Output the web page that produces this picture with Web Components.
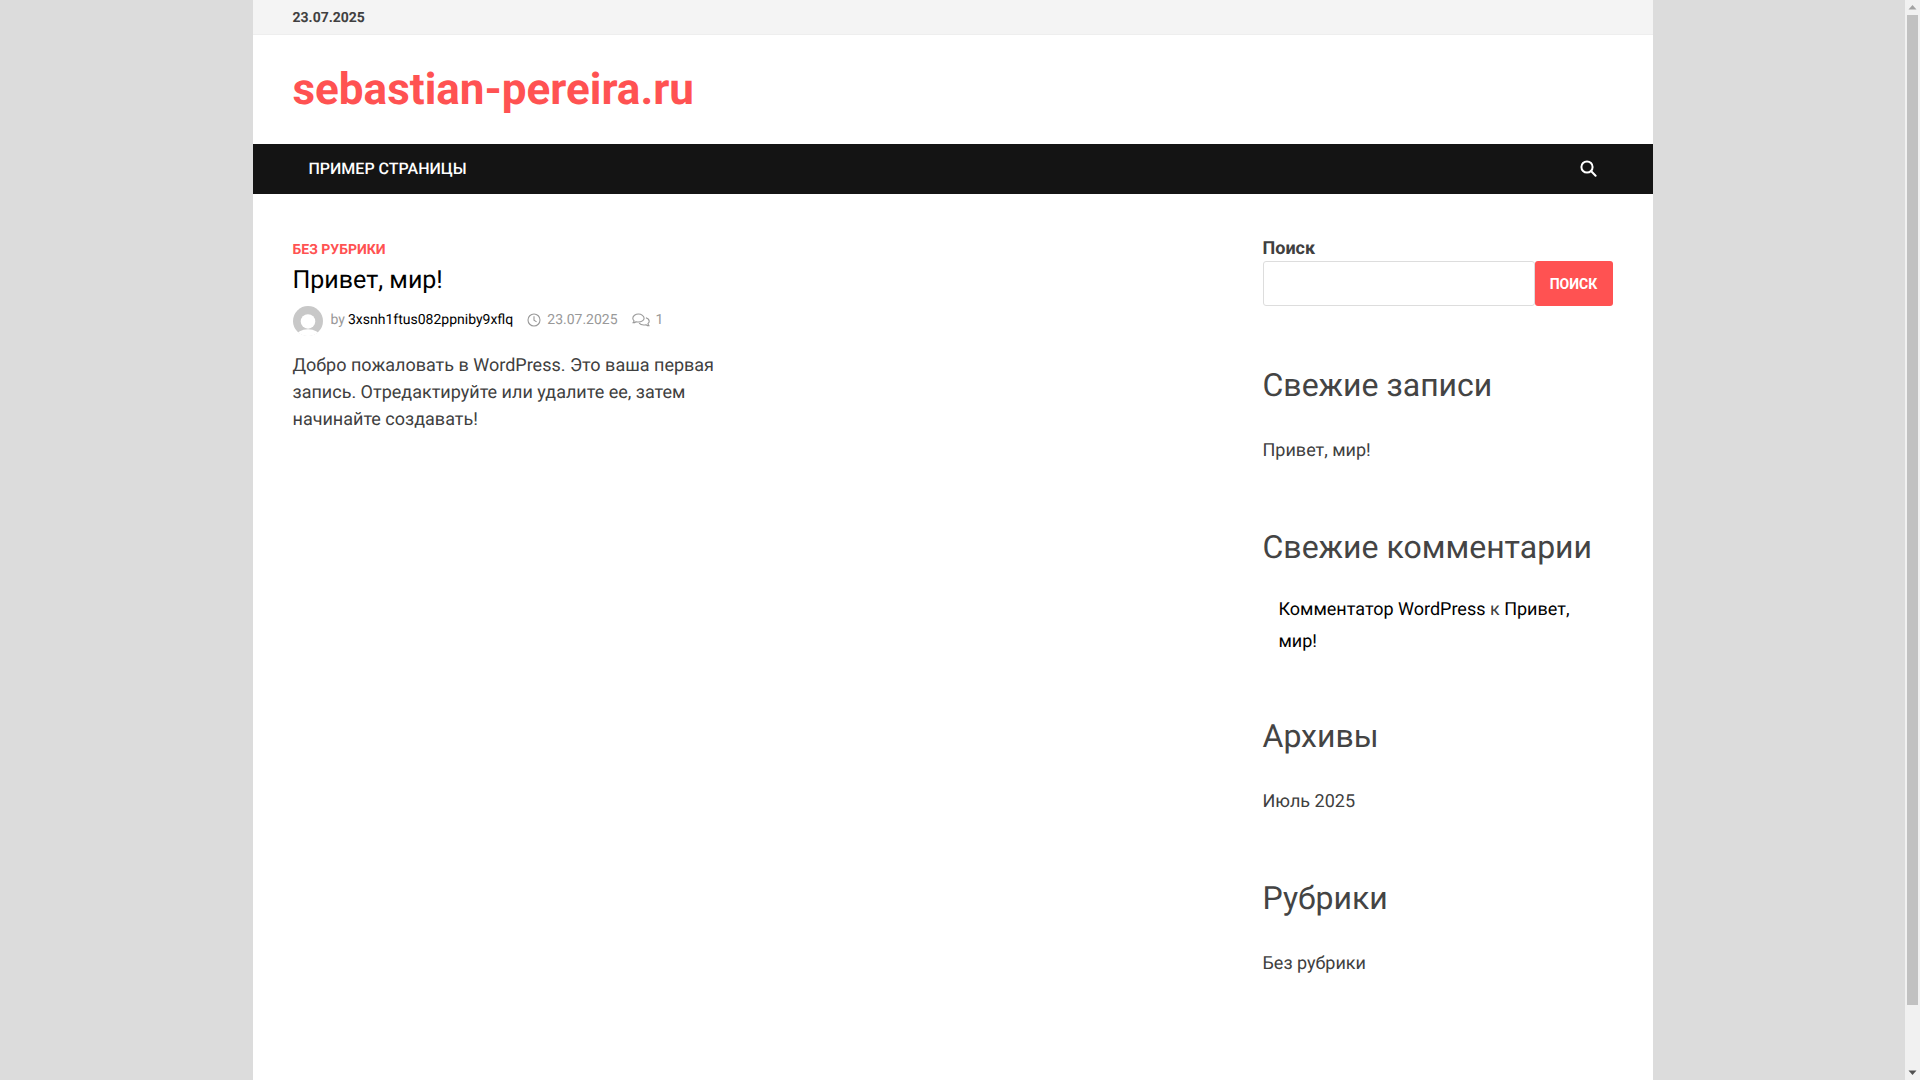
<!DOCTYPE html>
<html lang="ru">
<head>
<meta charset="utf-8">
<title>sebastian-pereira.ru</title>
<style>
	html, body { margin: 0; height: 100%; overflow: hidden; }
	body { display: flex; background: #dcdcdc; font-family: Roboto, "Liberation Sans", sans-serif; color: #404040; text-rendering: geometricPrecision; }
</style>
</head>
<body>
<site-page>
	<top-bar>23.07.2025</top-bar>
	<site-brand>sebastian-pereira.ru</site-brand>
	<main-nav>Пример страницы</main-nav>
	<site-content>
		<post-entry category="Без рубрики" heading="Привет, мир!" author="3xsnh1ftus082ppniby9xflq" date="23.07.2025" comments="1">
			Добро пожаловать в WordPress. Это ваша первая запись. Отредактируйте или удалите ее, затем начинайте создавать!
		</post-entry>
		<side-bar>
			<search-widget></search-widget>
			<side-widget heading="Свежие записи"><span>Привет, мир!</span></side-widget>
			<side-widget heading="Свежие комментарии" list><b>Комментатор WordPress</b> к <b>Привет,</b> <b>мир!</b></side-widget>
			<side-widget heading="Архивы"><span>Июль 2025</span></side-widget>
			<side-widget heading="Рубрики"><span>Без рубрики</span></side-widget>
		</side-bar>
	</site-content>
</site-page>
<fake-scrollbar></fake-scrollbar>

<script>
'use strict';

function define (name, css, html) {
	window.customElements.define(name, class extends HTMLElement {
		constructor () {
			super();
			let shadowRoot = this.attachShadow({mode: 'open'});
			let attrs = name => this.getAttribute(name) || '';
			shadowRoot.innerHTML = `<style>${css}</style>${typeof html === 'function' ? html(attrs) : html}`;
		}
	});
}

define('site-page', `
	:host {
		display: flex;
		flex-direction: column;
		width: 1400px;
		height: 1080px;
		margin-left: 252.5px;
		background: #fff;
		flex: none;
	}
`, '<slot></slot>');

define('top-bar', `
	:host {
		display: flex;
		align-items: center;
		height: 35px;
		box-sizing: border-box;
		padding: 1px 40px 0;
		background: #f4f4f4;
		border-bottom: 1px solid #eee;
		font-size: 14px;
		font-weight: 700;
		color: #404040;
	}
`, '<slot></slot>');

define('site-brand', `
	:host {
		display: flex;
		align-items: center;
		height: 109px;
		box-sizing: border-box;
		padding: 0 40px 2px;
		font-size: 44px;
		font-weight: 700;
		color: #ff5252;
	}
`, '<slot></slot>');

define('main-nav', `
	:host {
		display: flex;
		align-items: center;
		justify-content: space-between;
		height: 50px;
		padding: 0 56px;
		background: #141414;
		color: #fff;
		font-size: 16px;
		font-weight: 500;
		text-transform: uppercase;
		box-sizing: border-box;
	}
	span { margin-top: -2px; }
	svg { display: block; margin-top: -3px; }
`, `<span><slot></slot></span>
	<svg width="18" height="18" viewBox="0 0 18 18" fill="none" stroke="#fff" stroke-width="2">
		<circle cx="8" cy="8" r="5.6"/>
		<path d="M12 12l4.600 4.800" stroke-linecap="round"/>
	</svg>`);

define('site-content', `
	:host {
		display: flex;
		justify-content: space-between;
		align-items: flex-start;
		padding: 45px 40px 0;
	}
`, '<slot></slot>');

define('post-entry', `
	:host {
		display: block;
		width: 450px;
	}
	.cat {
		font-size: 14px;
		font-weight: 700;
		line-height: 22px;
		color: #ff5252;
		text-transform: uppercase;
	}
	h2 {
		margin: 2px 0 0;
		font-size: 25px;
		font-weight: 400;
		line-height: 36px;
		color: #000;
	}
	.meta {
		display: flex;
		align-items: center;
		margin-top: 4px;
		height: 34px;
		font-size: 14px;
		color: #999;
	}
	.meta svg { display: block; flex: none; }
	.avatar { margin: 2px 8px 0 0; }
	.by { margin-right: 3px; }
	.author { color: #000; margin-right: 14px; }
	.date { margin: 0 14px 0 6px; }
	.num { margin-left: 6px; }
	.text {
		margin-top: 15px;
		font-size: 18px;
		line-height: 27px;
		color: #404040;
	}
`, attr => `
	<div class="cat">${attr('category')}</div>
	<h2>${attr('heading')}</h2>
	<div class="meta">
		<svg class="avatar" width="30" height="30" viewBox="0 0 31 31">
			<defs><clipPath id="round"><circle cx="15.5" cy="15.5" r="15.5"/></clipPath></defs>
			<g clip-path="url(#round)">
				<rect width="31" height="31" fill="#c8c8c8"/>
				<circle cx="15.5" cy="16" r="7.5" fill="#fff"/>
				<ellipse cx="15.5" cy="31" rx="12" ry="7" fill="#fff"/>
				<rect y="27" width="31" height="4" fill="#fff"/>
			</g>
		</svg>
		<span class="by">by</span>
		<span class="author">${attr('author')}</span>
		<svg width="14" height="14" viewBox="0 0 14 14" fill="none" stroke="#999" stroke-width="1.1">
			<circle cx="7" cy="7" r="6"/>
			<path d="M7 3.200V7.300l2.600 1.600"/>
		</svg>
		<span class="date">${attr('date')}</span>
		<svg width="18" height="15" viewBox="0 0 18 15" fill="none" stroke="#999" stroke-width="1.1" stroke-linejoin="round">
			<path d="M6.500 1C3.500 1 .8 2.800.8 5.200c0 1 .5 1.900 1.300 2.600-.2.800-.7 1.500-1.200 2 1.200 0 2.400-.5 3.200-1.100.7.200 1.500.3 2.400.3 3 0 5.600-1.800 5.600-3.800S9.500 1 6.500 1z"/>
			<path d="M13.900 4.700c1.900.6 3.300 1.900 3.300 3.500 0 1-.5 1.800-1.300 2.500.2.800.6 1.500 1.200 2.100-1.200 0-2.300-.5-3.100-1.100-.7.200-1.500.3-2.300.3-1.900 0-3.600-.7-4.600-1.800"/>
		</svg>
		<span class="num">${attr('comments')}</span>
	</div>
	<div class="text"><slot></slot></div>
`);

define('side-bar', `
	:host {
		display: flex;
		flex-direction: column;
		width: 350px;
		margin-top: -4px;
	}
`, '<slot></slot>');

define('search-widget', `
	:host { display: block; margin-bottom: 56px; }
	label {
		display: block;
		font-size: 18px;
		font-weight: 700;
		line-height: 27px;
		color: #404040;
	}
	.row { display: flex; margin-top: -1px; }
	input {
		flex: 1;
		min-width: 0;
		height: 45px;
		box-sizing: border-box;
		border: 1px solid #ddd;
		border-radius: 3px;
		background: #fff;
		padding: 0 12px;
	}
	button {
		width: 78px;
		height: 45px;
		border: 0;
		border-radius: 3px;
		background: #ff5252;
		color: #fff;
		font: 700 14px Roboto, "Liberation Sans", sans-serif;
		text-transform: uppercase;
		padding: 0;
	}
`, `<label for="q">Поиск</label>
	<div class="row"><input id="q" type="text"><button type="button">Поиск</button></div>`);

define('side-widget', `
	:host { display: block; margin-bottom: 60px; }
	h2 {
		margin: 0;
		font-size: 32px;
		font-weight: 400;
		line-height: 46px;
		color: #444;
	}
	.body {
		margin-top: 29px;
		font-size: 18px;
		line-height: 27px;
		color: #404040;
	}
	:host([list]) .body {
		margin-top: 24px;
		padding: 0 30px 0 16px;
		line-height: 32px;
		color: #404040;
	}
	:host([list]) { margin-bottom: 55px; }
	::slotted(b) { font-weight: 400; color: #000; }
`, attr => `<h2>${attr('heading')}</h2><div class="body"><slot></slot></div>`);

define('fake-scrollbar', `
	:host {
		display: flex;
		flex-direction: column;
		align-items: center;
		justify-content: space-between;
		position: fixed;
		top: 0;
		right: 0;
		bottom: 0;
		width: 15px;
		box-sizing: border-box;
		background: #f1f1f1;
	}
	.thumb {
		position: absolute;
		top: 15px;
		left: 2px;
		right: 2px;
		height: 990px;
		background: #c1c1c1;
	}
	svg { display: block; }
`, `<svg width="15" height="15" viewBox="0 0 15 15"><path d="M3.500 9.500h8L7.500 5z" fill="#a3a3a3"/></svg>
	<div class="thumb"></div>
	<svg width="15" height="15" viewBox="0 0 15 15"><path d="M3.500 5.500h8L7.500 10z" fill="#505050"/></svg>`);
</script>
</body>
</html>
